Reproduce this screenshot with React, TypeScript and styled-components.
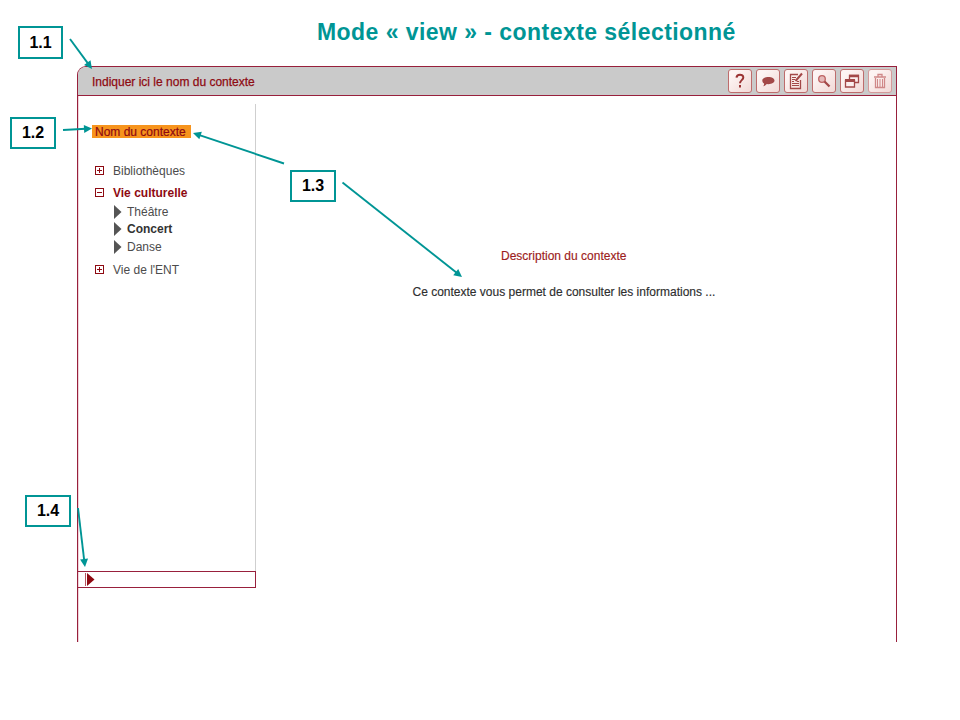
import React from "react";
import styled, { createGlobalStyle } from "styled-components";

const TEAL = "#009595";
const WINE = "#98203c";
const RED = "#8e0a12";

const GlobalStyle = createGlobalStyle`
  * { box-sizing: border-box; }
  html, body { margin: 0; background: #fff; }
  body { font-family: "Liberation Sans", Arial, sans-serif; }
`;

const Slide = styled.main`
  position: relative;
  width: 960px;
  height: 720px;
  overflow: hidden;
  background: #fff;
`;

const Title = styled.h1`
  margin: 0;
  height: 66px;
  padding: 18px 0 0 317px;
  color: ${TEAL};
  font-size: 23px;
  line-height: 28px;
  font-weight: bold;
  letter-spacing: 0.45px;
  white-space: nowrap;
`;

const Window = styled.section`
  display: flex;
  flex-direction: column;
  width: 820px;
  height: 576px;
  margin-left: 77px;
  border: 1px solid ${WINE};
  border-bottom: 0;
  border-top-left-radius: 9px;
  box-shadow: inset 1px 0 #f0d3da;
  overflow: hidden;
`;

const Toolbar = styled.header`
  display: flex;
  flex: none;
  align-items: center;
  justify-content: space-between;
  height: 29px;
  padding: 0 4px 0 14px;
  background: #cacaca;
  border-bottom: 1px solid ${WINE};
`;

const ContextName = styled.span`
  color: ${RED};
  font-size: 12px;
  line-height: 16px;
  padding-top: 2px;
  -webkit-text-stroke: 0.25px;
  white-space: nowrap;
`;

const Tools = styled.nav`
  display: flex;
  gap: 4px;
`;

const ToolButton = styled.button<{ $dim?: boolean }>`
  display: grid;
  place-items: center;
  width: 24px;
  height: 24px;
  padding: 0;
  border: 1px solid ${(p) => (p.$dim ? "#d49a9a" : "#bd6c6c")};
  border-radius: 3px;
  background: linear-gradient(135deg, #fdf4f3 20%, #f3dcda 90%);
  svg { display: block; }
`;

const Body = styled.div`
  display: flex;
  flex: 1;
`;

const Sidebar = styled.aside`
  display: flex;
  flex-direction: column;
  width: 178px;
  padding-top: 8px;
`;

const Nav = styled.div`
  height: 467px;
  padding: 21px 0 0 14px;
  border-right: 1px solid #cfcfcf;
`;

const Selected = styled.div`
  width: 99px;
  height: 13px;
  padding-left: 3px;
  background: #f7941d;
  color: ${RED};
  font-size: 12px;
  line-height: 14px;
  -webkit-text-stroke: 0.2px;
  white-space: nowrap;
`;

const Tree = styled.ul`
  list-style: none;
  margin: 24px 0 0;
  padding: 0 0 0 3px;
`;

const Branch = styled.li<{ $open?: boolean; $h: number }>`
  display: flex;
  align-items: center;
  gap: 9px;
  height: ${(p) => p.$h}px;
  margin-top: ${(p) => (p.$open ? 3 : 0)}px;
  color: ${(p) => (p.$open ? RED : "#4c4c4c")};
  font-size: 12px;
  font-weight: ${(p) => (p.$open ? "bold" : "normal")};
  white-space: nowrap;
`;

const Leaf = styled.li<{ $bold?: boolean }>`
  display: flex;
  align-items: center;
  gap: 5px;
  height: 17.6px;
  padding-left: 19px;
  color: ${(p) => (p.$bold ? "#333" : "#4c4c4c")};
  font-size: 12px;
  font-weight: ${(p) => (p.$bold ? "bold" : "normal")};
`;

const Collapser = styled.div`
  display: flex;
  align-items: center;
  height: 17px;
  padding-left: 7px;
  border: 1px solid ${WINE};
  border-left: 0;
`;

const Content = styled.article`
  flex: 1;
  padding-top: 152px;
`;

const ContentTitle = styled.h2`
  margin: 0 0 20px 245px;
  color: #9c1c20;
  font-size: 12px;
  line-height: 16px;
  font-weight: normal;
  -webkit-text-stroke: 0.15px;
  white-space: nowrap;
`;

const ContentText = styled.p`
  margin: 0 0 0 156.5px;
  color: #2e2e2e;
  font-size: 12px;
  line-height: 16px;
  -webkit-text-stroke: 0.15px;
  white-space: nowrap;
`;

const Callout = styled.div<{ $x: number; $y: number; $w: number; $h: number }>`
  position: absolute;
  left: ${(p) => p.$x}px;
  top: ${(p) => p.$y}px;
  display: grid;
  place-items: center;
  width: ${(p) => p.$w}px;
  height: ${(p) => p.$h}px;
  background: #fff;
  border: 2px solid ${TEAL};
  color: #000;
  font-size: 16px;
  line-height: 18px;
  font-weight: bold;
`;

const Arrows = styled.svg`
  position: absolute;
  inset: 0;
  pointer-events: none;
`;

const Toggle = ({ open }: { open?: boolean }) => (
  <svg width="9" height="9" viewBox="0 0 9 9" shapeRendering="crispEdges">
    <path d="M.5.5h8v8h-8z" fill="#fff" stroke={RED} />
    <path d={open ? "M2 4.5h5" : "M2 4.5h5M4.5 2v5"} stroke={RED} />
  </svg>
);

const Caret = () => (
  <svg width="8" height="14" viewBox="0 0 8 14">
    <path d="M0 0 7.500 7 0 14z" fill="#555" />
  </svg>
);

const ink = "#a34848";

const HelpIcon = () => (
  <svg width="22" height="22" fill="none" stroke="#9b3434" strokeWidth="2">
    <path d="M7.5 7.6C7.7 3.7 14.4 3.8 14.3 7.5c0 2.5-3.3 2.8-3.3 5.7" />
    <path d="M11 15v2.4" />
  </svg>
);
const BubbleIcon = () => (
  <svg width="22" height="22" fill={ink}>
    <path d="M11.5 7c3.4 0 6 1.5 6 3.6s-2.6 3.6-6 3.6l-1.7-.1C8.7 15.3 7.6 16 6.2 16.3c.7-.9 1-1.7.9-2.7C5.900 12.900 5.300 11.800 5.300 10.600 5.300 8.500 8.100 7 11.500 7z" />
  </svg>
);
const NoteIcon = () => (
  <svg width="22" height="22" fill="none" stroke={ink}>
    <path d="M13 4.500H5.500v14h10V10" strokeWidth="1.300" />
    <path d="M7 7.500h4M7 9.500h3M7 11.500h2M12 11.500h2M7 13.500h7M7 15.500h7" />
    <path d="m10.500 11 6.500-7.500" strokeWidth="2" />
  </svg>
);
const SearchIcon = () => (
  <svg width="22" height="22" fill="none" stroke="#bd6262">
    <circle cx="9" cy="9" r="3.3" fill="#e5b9b9" strokeWidth="1.300" />
    <path d="m11.500 11.500 5 5" stroke={ink} strokeWidth="2.300" />
  </svg>
);
const WindowsIcon = () => (
  <svg width="22" height="22" fill="#fbeeee" stroke={ink} strokeWidth="1.3">
    <path d="M8.500 5.500h9v7h-9z" />
    <path d="M8 6h10" strokeWidth="2.500" />
    <path d="M4.500 10.500h9v6.500h-9z" />
    <path d="M4 10.500h10" strokeWidth="2.800" />
  </svg>
);
const TrashIcon = () => (
  <svg width="22" height="22" fill="none" stroke="#cf8888">
    <path d="M5 7h12M9 6.500V4.500h4v2M6.500 8v9.500h9V8" strokeWidth="1.300" />
    <path d="M8.500 9v8M11 9v8M13.500 9v8" />
  </svg>
);

type Point = [number, number];

const Arrow = ({ from, to }: { from: Point; to: Point }) => {
  const a = Math.atan2(to[1] - from[1], to[0] - from[0]);
  const at = (back: number, side: number) =>
    `${to[0] - back * Math.cos(a) - side * Math.sin(a)},${to[1] - back * Math.sin(a) + side * Math.cos(a)}`;
  return (
    <g fill={TEAL} stroke={TEAL}>
      <path d={`M${from[0]},${from[1]}L${at(6, 0)}`} strokeWidth="1.9" />
      <path d={`M${at(0, 0)}L${at(8, 4)}L${at(8, -4)}z`} stroke="none" />
    </g>
  );
};

const tools = [
  { name: "Aide", Icon: HelpIcon },
  { name: "Commenter", Icon: BubbleIcon },
  { name: "Modifier", Icon: NoteIcon },
  { name: "Rechercher", Icon: SearchIcon },
  { name: "Fenêtres", Icon: WindowsIcon },
  { name: "Supprimer", Icon: TrashIcon, dim: true },
];

export default function App() {
  return (
    <Slide>
      <GlobalStyle />
      <Title>Mode « view » - contexte sélectionné</Title>
      <Window>
        <Toolbar>
          <ContextName>Indiquer ici le nom du contexte</ContextName>
          <Tools>
            {tools.map(({ name, Icon, dim }) => (
              <ToolButton key={name} aria-label={name} $dim={dim}>
                <Icon />
              </ToolButton>
            ))}
          </Tools>
        </Toolbar>
        <Body>
          <Sidebar>
            <Nav>
              <Selected>Nom du contexte</Selected>
              <Tree>
                <Branch $h={17}><Toggle />Bibliothèques</Branch>
                <Branch $h={21} $open><Toggle open />Vie culturelle</Branch>
                <Leaf><Caret />Théâtre</Leaf>
                <Leaf $bold><Caret />Concert</Leaf>
                <Leaf><Caret />Danse</Leaf>
                <Branch $h={28}><Toggle />Vie de l'ENT</Branch>
              </Tree>
            </Nav>
            <Collapser>
              <svg width="10" height="13">
                <path d="M.5 0v13" stroke="#b65560" />
                <path d="M2 0 9.500 6.500 2 13z" fill={RED} />
              </svg>
            </Collapser>
          </Sidebar>
          <Content>
            <ContentTitle>Description du contexte</ContentTitle>
            <ContentText>Ce contexte vous permet de consulter les informations ...</ContentText>
          </Content>
        </Body>
      </Window>
      <Callout $x={18} $y={26} $w={45} $h={33}>1.1</Callout>
      <Callout $x={10} $y={117} $w={46} $h={32}>1.2</Callout>
      <Callout $x={290} $y={170} $w={46} $h={32}>1.3</Callout>
      <Callout $x={25} $y={495} $w={46} $h={32}>1.4</Callout>
      <Arrows width="960" height="720">
        <Arrow from={[70, 39]} to={[92, 69]} />
        <Arrow from={[63, 130]} to={[92, 128.5]} />
        <Arrow from={[284, 163.5]} to={[193, 133]} />
        <Arrow from={[342.5, 182.5]} to={[462, 277]} />
        <Arrow from={[78, 508]} to={[85, 567]} />
      </Arrows>
    </Slide>
  );
}
